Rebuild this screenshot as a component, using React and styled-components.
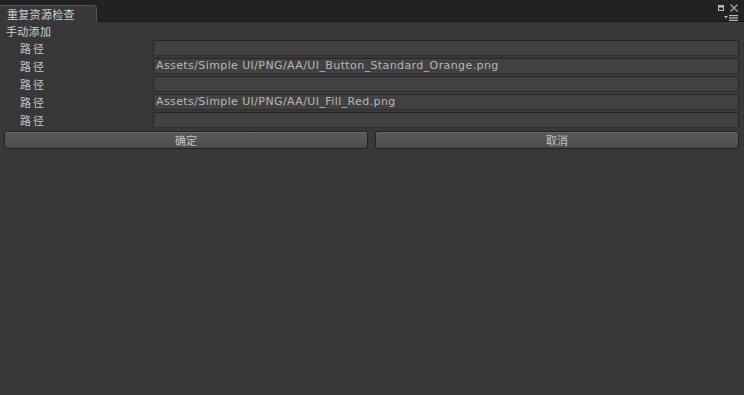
import styled, { createGlobalStyle } from "styled-components"

const GlobalStyle = createGlobalStyle`
  html, body {
    margin: 0;
    padding: 0;
    background: #383838;
  }
  body {
    width: 744px;
    height: 395px;
    overflow: hidden;
    font-family: "DejaVu Sans", "Noto Sans CJK SC", sans-serif;
  }
`

const Window = styled.div`
  width: 744px;
  height: 395px;
  background: #383838;
  display: flex;
  flex-direction: column;
`

const TabBar = styled.div`
  height: 22px;
  background: #222222;
  border-bottom: 1px solid #1a1a1a;
  display: flex;
  align-items: flex-end;
  justify-content: space-between;
  box-sizing: border-box;
`

const Tab = styled.div`
  width: 97px;
  height: 17px;
  box-sizing: border-box;
  background: #383838;
  border: 1px solid #555;
  border-bottom: none;
  border-left: none;
  border-radius: 0 4px 0 0;
  margin-bottom: -1px;
  color: #d2d2d2;
  font-family: "Noto Sans CJK SC", sans-serif;
  font-size: 11px;
  line-height: 17px;
  padding-left: 7px;
  letter-spacing: 0.3px;
`

const WinIcons = styled.div`
  display: flex;
  flex-direction: column;
  align-items: flex-end;
  padding-right: 6px;
  gap: 3px;
  align-self: stretch;
  padding-top: 4px;
`

const IconRow = styled.div`
  display: flex;
  gap: 6px;
  align-items: center;
`

const Content = styled.div`
  display: flex;
  flex-direction: column;
  padding: 0 5px 0 4px;
`

const SectionTitle = styled.div`
  color: #cfcfcf;
  font-family: "Noto Sans CJK SC", sans-serif;
  font-size: 11px;
  letter-spacing: 0.3px;
  height: 18px;
  line-height: 18px;
  padding-left: 2px;
`

const Rows = styled.div`
  display: flex;
  flex-direction: column;
  gap: 2px;
`

const Row = styled.div`
  display: flex;
  align-items: center;
  height: 16px;
`

const Label = styled.div`
  width: 149px;
  flex: none;
  padding-left: 16px;
  box-sizing: border-box;
  color: #c8c8c8;
  font-family: "Noto Sans CJK SC", sans-serif;
  font-size: 11px;
  letter-spacing: 2px;
`

const Field = styled.div`
  flex: 1;
  height: 16px;
  box-sizing: border-box;
  background: #414141;
  border: 1px solid #262626;
  border-bottom-color: #2e2e2e;
  color: #b8b8b8;
  font-size: 11px;
  letter-spacing: 0.4px;
  line-height: 14px;
  padding-left: 2px;
  white-space: nowrap;
  overflow: hidden;
`

const Buttons = styled.div`
  display: grid;
  grid-template-columns: 1fr 1fr;
  gap: 7px;
  margin-top: 3px;
`

const Button = styled.div`
  height: 18px;
  box-sizing: border-box;
  border: 1px solid #222;
  border-radius: 3px;
  background: linear-gradient(#5a5a5a, #4c4c4c);
  box-shadow: inset 0 1px 0 #666;
  color: #c4c4c4;
  font-family: "Noto Sans CJK SC", sans-serif;
  font-size: 11px;
  line-height: 16px;
  text-align: center;
`

const paths = [
  "",
  "Assets/Simple UI/PNG/AA/UI_Button_Standard_Orange.png",
  "",
  "Assets/Simple UI/PNG/AA/UI_Fill_Red.png",
  "",
]

export default function App() {
  return (
    <Window>
      <GlobalStyle />
      <TabBar>
        <Tab>重复资源检查</Tab>
        <WinIcons>
          <IconRow>
            <svg width="6" height="6" viewBox="0 0 6 6">
              <rect x="0.5" y="0.5" width="5" height="5" fill="none" stroke="#bbb" />
              <rect x="1" y="1" width="4" height="1.5" fill="#bbb" />
            </svg>
            <svg width="8" height="8" viewBox="0 0 8 8">
              <path d="M0.5 0.5L7.5 7.5M7.5 0.5L0.5 7.5" stroke="#aaa" strokeWidth="1.1" />
            </svg>
          </IconRow>
          <svg width="14" height="6" viewBox="0 0 14 6">
            <path d="M0 1h4L2 3.5z" fill="#bbb" />
            <rect x="5" y="0" width="9" height="1.2" fill="#bbb" />
            <rect x="5" y="2.4" width="9" height="1.2" fill="#bbb" />
            <rect x="5" y="4.8" width="9" height="1.2" fill="#bbb" />
          </svg>
        </WinIcons>
      </TabBar>
      <Content>
        <SectionTitle>手动添加</SectionTitle>
        <Rows>
          {paths.map((p, i) => (
            <Row key={i}>
              <Label>路径</Label>
              <Field>{p}</Field>
            </Row>
          ))}
        </Rows>
        <Buttons>
          <Button>确定</Button>
          <Button>取消</Button>
        </Buttons>
      </Content>
    </Window>
  )
}
